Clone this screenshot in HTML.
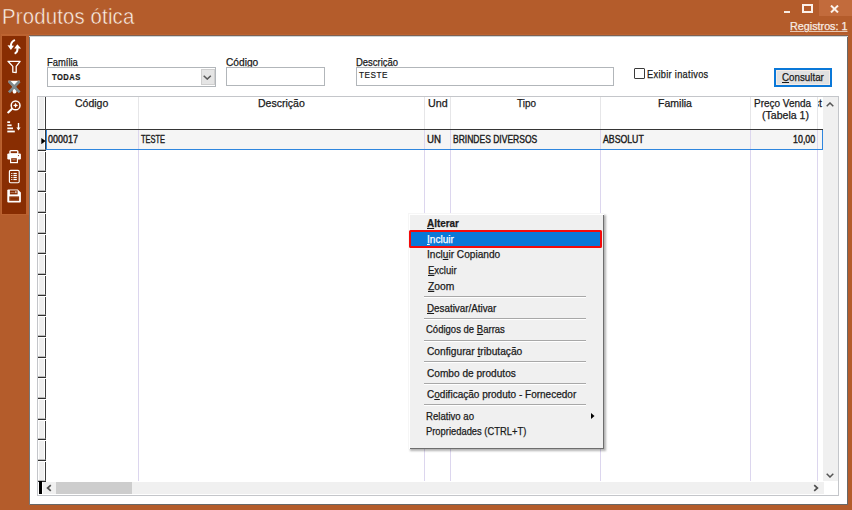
<!DOCTYPE html><html><head><meta charset="utf-8"><style>
html,body{margin:0;padding:0;}
body{width:852px;height:510px;overflow:hidden;position:relative;background:#b45c2b;font-family:"Liberation Sans", sans-serif;}
.a{position:absolute;}
.t{position:absolute;white-space:nowrap;transform-origin:0 0;-webkit-text-stroke:0.25px currentColor;}
u{text-decoration:underline;text-decoration-thickness:1px;text-underline-offset:0.6px;}
</style></head><body>
<div class="t" id="title" style="left:1.71px;top:2.34px;font-size:22.4px;line-height:29px;color:#fdf3ec;font-weight:normal;transform:scaleX(0.9075);-webkit-text-stroke:0.5px #b45c2b;letter-spacing:0.2px;">Produtos ótica</div>
<div class="a" style="left:819px;top:0;width:33px;height:16px;background:#c26b3c;"></div>
<div class="a" style="left:783.5px;top:10.5px;width:6px;height:2px;background:#f7ebe2;"></div>
<div class="a" style="left:802.4px;top:4.4px;width:6.2px;height:4.6px;border:2px solid #fbf1ea;border-top-width:2.3px;"></div>
<svg class="a" style="left:830px;top:5px" width="9" height="8" viewBox="0 0 9 8"><path d="M1 0.6L8 7.4M8 0.6L1 7.4" stroke="#fbf1ea" stroke-width="2.1"/></svg>
<div class="t" id="reg" style="left:789.67px;top:20.10px;font-size:10.4px;line-height:14px;color:#f7ebe2;font-weight:normal;transform:scaleX(1.0370);"><u style="text-underline-offset:1.1px;text-decoration-color:rgba(247,235,226,0.75)">Registros: 1</u></div>
<div class="a" style="left:1px;top:34px;width:27.5px;height:181px;background:#bb6230;"></div>
<div class="a" style="left:2px;top:35.5px;width:24.3px;height:178px;background:#882d02;"></div>
<svg class="a" style="left:0;top:0" width="30" height="220" viewBox="0 0 30 220">
<g fill="none" stroke="#ffffff" stroke-linecap="round" stroke-linejoin="round">
<path d="M14.2 40.4 Q10.8 42.2 10.9 46" stroke-width="2"/>
<path d="M17.5 48 Q17.7 51.8 15.4 53.2" stroke-width="2"/>
<path d="M8 61.3 H20.1 L16.2 66.4 V72.6 L12.8 72.2 V66.4 Z" stroke-width="1.3"/>
<circle cx="15.6" cy="105.4" r="4.4" stroke-width="1.5"/>
<path d="M11.8 109 L8.2 112.4" stroke-width="2.1"/>
<rect x="10" y="150.6" width="7.8" height="3.4" rx="0.8" stroke-width="1.4"/>
<rect x="9.4" y="170.4" width="9.8" height="12.3" rx="1.2" stroke-width="1.15"/>
</g>
<g fill="#ffffff">
<path d="M7.5 45.3 L14 45.7 L10.9 50 Z"/>
<path d="M17.3 44.2 L21.1 48.6 L14.2 48.4 Z"/>
<path d="M8 80.8 H20.1 L16 86.5 L16.6 92 Q15.5 94 13.6 93.4 Q12.2 92.6 12.6 90 L12.4 86.5 Z"/>
<path d="M15.6 102.8 L16.4 104.6 L18.2 105.4 L16.4 106.2 L15.6 108 L14.8 106.2 L13 105.4 L14.8 104.6 Z"/>
<rect x="7.3" y="121.3" width="2.8" height="1.7"/>
<rect x="7.3" y="124.4" width="4.3" height="1.7"/>
<rect x="7.3" y="127.5" width="5.7" height="1.7"/>
<rect x="7.3" y="130.6" width="7.5" height="1.8"/>
<rect x="17.8" y="123" width="1.4" height="5"/>
<path d="M16.4 127.5 H20.6 L18.5 130.6 Z"/>
<rect x="7.3" y="153.4" width="13.6" height="6" rx="1.2"/>
<rect x="11.2" y="173" width="1.2" height="1"/><rect x="13.4" y="172.9" width="3.4" height="1.2"/>
<rect x="11.2" y="175" width="1.2" height="1"/><rect x="13.4" y="174.9" width="3.4" height="1.2"/>
<rect x="11.2" y="177" width="1.2" height="1"/><rect x="13.4" y="176.9" width="3.4" height="1.2"/>
<rect x="11.2" y="179" width="1.2" height="1"/><rect x="13.4" y="178.9" width="3.4" height="1.2"/>
</g>
<path d="M8.9 81.2 L19.6 92.4 M19.6 81.2 L8.9 92.4" stroke="#7e898d" stroke-width="2.7"/>
<circle cx="18.5" cy="155.6" r="0.6" fill="#8a2e04"/>
<rect x="10.6" y="157.6" width="6.8" height="5" fill="#8a2e04" stroke="#ffffff" stroke-width="1.2"/>
<rect x="12.4" y="159.4" width="3.2" height="0.8" fill="#ffffff" opacity="0.6"/>
<path d="M8.3 189.5 H17.8 L20.9 192.6 V201.6 Q20.9 202.6 19.9 202.6 H8.3 Q7.3 202.6 7.3 201.6 V190.5 Q7.3 189.5 8.3 189.5 Z" fill="#fff"/>
<rect x="9.9" y="190.4" width="7.7" height="4" fill="#882d02"/>
<rect x="10.4" y="192.1" width="4.2" height="0.7" fill="#fff" opacity="0.45"/>
<rect x="15.2" y="191.2" width="1.3" height="1.9" fill="#fff" opacity="0.8"/>
<rect x="9.3" y="196.4" width="9.8" height="4.4" fill="#882d02"/>
<rect x="10.2" y="197.3" width="8" height="2.6" fill="none" stroke="#fff" stroke-width="0.5" opacity="0.12"/>
</svg>
<div class="a" style="left:1px;top:34px;width:848px;height:1px;background:#bd6330;"></div>
<div class="a" style="left:29px;top:35px;width:819px;height:470px;background:#fff;box-shadow:inset 0 1px 0 #806050, inset 0 2px 0 #cdd6da, inset 1px 0 0 #787878, inset -1px -1px 0 #686868;"></div>
<div class="t" id="lfam" style="left:47.08px;top:55.46px;font-size:10.5px;line-height:14px;color:#1a1a1a;font-weight:normal;transform:scaleX(0.8946);">Família</div>
<div class="a" style="left:47px;top:67px;width:167px;height:18px;border:1px solid #b2b6ba;background:#fff;"></div>
<div class="t" id="todas" style="left:52.32px;top:70.74px;font-size:9.4px;line-height:12px;color:#1a1a1a;font-weight:bold;transform:scaleX(0.8087);-webkit-text-stroke:0.2px currentColor;letter-spacing:0.6px;">TODAS</div>
<div class="a" style="left:200.5px;top:68.8px;width:12px;height:14px;background:#e5e5e5;border:1px solid #cfcfcf;"></div>
<svg class="a" style="left:203px;top:74.5px" width="8.5" height="5" viewBox="0 0 8.5 5"><path d="M0.7 0.7L4.25 4.1L7.8 0.7" fill="none" stroke="#5a5a5a" stroke-width="1.5"/></svg>
<div class="a" style="left:220px;top:50px;width:150px;height:17px;overflow:hidden;">
<div class="t" id="lcod" style="left:6.48px;top:5.46px;font-size:10.5px;line-height:14px;color:#1a1a1a;font-weight:normal;transform:scaleX(0.9693);">Código</div>
</div>
<div class="a" style="left:226px;top:67px;width:97px;height:17px;border:1px solid #b2b6ba;background:#fff;"></div>
<div class="a" style="left:350px;top:50px;width:150px;height:17px;overflow:hidden;">
<div class="t" id="ldesc" style="left:5.51px;top:5.46px;font-size:10.5px;line-height:14px;color:#1a1a1a;font-weight:normal;transform:scaleX(0.9013);">Descrição</div>
</div>
<div class="a" style="left:356px;top:67px;width:256px;height:17px;border:1px solid #b2b6ba;background:#fff;"></div>
<div class="t" id="teste1" style="left:359.04px;top:69.21px;font-size:9.2px;line-height:12px;color:#1a1a1a;font-weight:normal;transform:scaleX(0.8891);letter-spacing:0.6px;-webkit-text-stroke:0.2px;">TESTE</div>
<div class="a" style="left:634px;top:68.4px;width:8.6px;height:8.6px;border:1.15px solid #3a3a3a;border-radius:1px;background:#fff;"></div>
<div class="t" id="exib" style="left:646.65px;top:67.16px;font-size:10.5px;line-height:14px;color:#1a1a1a;font-weight:normal;transform:scaleX(0.8786);letter-spacing:0.35px;">Exibir inativos</div>
<div class="a" style="left:774px;top:67.7px;width:53.8px;height:15.2px;border:2px solid #0a78d8;background:#e1e1e1;box-shadow:inset 0 0 0 1px #f6ece6;"></div>
<div class="t" id="cons" style="left:781.76px;top:70.26px;font-size:10.5px;line-height:14px;color:#1a1a1a;font-weight:normal;transform:scaleX(0.9311);"><u>C</u>onsultar</div>
<div class="a" style="left:37px;top:96px;width:800px;height:397.5px;border:1px solid #c4c6ca;background:#fff;"></div>
<div class="a" style="left:38px;top:97px;width:7px;height:384px;background:#efefef;box-shadow:inset 1px 0 0 #fff, inset -1px 0 0 #fff;"></div>
<div class="a" style="left:45px;top:97px;width:1.2px;height:384px;background:#3c3c3c;"></div>
<div class="a" style="left:38px;top:129px;width:786px;height:1.3px;background:#353535;"></div>
<div class="a" style="left:47px;top:130px;width:776px;height:19px;background:#f5f5f5;"></div>
<div class="a" style="left:137.5px;top:97px;width:1px;height:32px;background:#e6e6e8;"></div>
<div class="a" style="left:137.5px;top:130px;width:1px;height:351px;background:#dcd6ee;"></div>
<div class="a" style="left:424px;top:97px;width:1px;height:32px;background:#e6e6e8;"></div>
<div class="a" style="left:424px;top:130px;width:1px;height:351px;background:#dcd6ee;"></div>
<div class="a" style="left:450px;top:97px;width:1px;height:32px;background:#e6e6e8;"></div>
<div class="a" style="left:450px;top:130px;width:1px;height:351px;background:#dcd6ee;"></div>
<div class="a" style="left:600px;top:97px;width:1px;height:32px;background:#e6e6e8;"></div>
<div class="a" style="left:600px;top:130px;width:1px;height:351px;background:#dcd6ee;"></div>
<div class="a" style="left:750px;top:97px;width:1px;height:32px;background:#e6e6e8;"></div>
<div class="a" style="left:750px;top:130px;width:1px;height:351px;background:#dcd6ee;"></div>
<div class="a" style="left:817px;top:97px;width:1px;height:32px;background:#e6e6e8;"></div>
<div class="a" style="left:817px;top:130px;width:1px;height:351px;background:#dcd6ee;"></div>
<div class="a" style="left:38px;top:150px;width:8px;height:1px;background:#303030;box-shadow:0 1px 0 #fff, 0 -0.5px 0 #8a8a8a;"></div>
<div class="a" style="left:38px;top:171px;width:8px;height:1px;background:#303030;box-shadow:0 1px 0 #fff, 0 -0.5px 0 #8a8a8a;"></div>
<div class="a" style="left:38px;top:191px;width:8px;height:1px;background:#303030;box-shadow:0 1px 0 #fff, 0 -0.5px 0 #8a8a8a;"></div>
<div class="a" style="left:38px;top:212px;width:8px;height:1px;background:#303030;box-shadow:0 1px 0 #fff, 0 -0.5px 0 #8a8a8a;"></div>
<div class="a" style="left:38px;top:233px;width:8px;height:1px;background:#303030;box-shadow:0 1px 0 #fff, 0 -0.5px 0 #8a8a8a;"></div>
<div class="a" style="left:38px;top:253px;width:8px;height:1px;background:#303030;box-shadow:0 1px 0 #fff, 0 -0.5px 0 #8a8a8a;"></div>
<div class="a" style="left:38px;top:274px;width:8px;height:1px;background:#303030;box-shadow:0 1px 0 #fff, 0 -0.5px 0 #8a8a8a;"></div>
<div class="a" style="left:38px;top:295px;width:8px;height:1px;background:#303030;box-shadow:0 1px 0 #fff, 0 -0.5px 0 #8a8a8a;"></div>
<div class="a" style="left:38px;top:315px;width:8px;height:1px;background:#303030;box-shadow:0 1px 0 #fff, 0 -0.5px 0 #8a8a8a;"></div>
<div class="a" style="left:38px;top:336px;width:8px;height:1px;background:#303030;box-shadow:0 1px 0 #fff, 0 -0.5px 0 #8a8a8a;"></div>
<div class="a" style="left:38px;top:357px;width:8px;height:1px;background:#303030;box-shadow:0 1px 0 #fff, 0 -0.5px 0 #8a8a8a;"></div>
<div class="a" style="left:38px;top:377px;width:8px;height:1px;background:#303030;box-shadow:0 1px 0 #fff, 0 -0.5px 0 #8a8a8a;"></div>
<div class="a" style="left:38px;top:398px;width:8px;height:1px;background:#303030;box-shadow:0 1px 0 #fff, 0 -0.5px 0 #8a8a8a;"></div>
<div class="a" style="left:38px;top:419px;width:8px;height:1px;background:#303030;box-shadow:0 1px 0 #fff, 0 -0.5px 0 #8a8a8a;"></div>
<div class="a" style="left:38px;top:439px;width:8px;height:1px;background:#303030;box-shadow:0 1px 0 #fff, 0 -0.5px 0 #8a8a8a;"></div>
<div class="a" style="left:38px;top:460px;width:8px;height:1px;background:#303030;box-shadow:0 1px 0 #fff, 0 -0.5px 0 #8a8a8a;"></div>
<div class="a" style="left:38px;top:481px;width:8px;height:1px;background:#303030;box-shadow:0 1px 0 #fff, 0 -0.5px 0 #8a8a8a;"></div>
<div class="a" style="left:46px;top:130px;width:775px;height:18.5px;border:1px solid #2f86de;border-top:none;"></div>
<svg class="a" style="left:41px;top:137.8px" width="5" height="6.5" viewBox="0 0 5 6.5"><path d="M0.3 0L4.6 3.1L0.3 6.2Z" fill="#000"/></svg>
<div class="t" id="hcod" style="left:75.10px;top:96.06px;font-size:10.5px;line-height:14px;color:#1a1a1a;font-weight:normal;transform:scaleX(0.9983);">Código</div>
<div class="t" id="hdesc" style="left:258.45px;top:95.96px;font-size:10.5px;line-height:14px;color:#1a1a1a;font-weight:normal;transform:scaleX(1.0020);">Descrição</div>
<div class="t" id="hund" style="left:428.01px;top:96.16px;font-size:10.5px;line-height:14px;color:#1a1a1a;font-weight:normal;transform:scaleX(1.0209);">Und</div>
<div class="t" id="htipo" style="left:516.61px;top:96.16px;font-size:10.5px;line-height:14px;color:#1a1a1a;font-weight:normal;transform:scaleX(0.9437);">Tipo</div>
<div class="t" id="hfam" style="left:658.02px;top:96.16px;font-size:10.5px;line-height:14px;color:#1a1a1a;font-weight:normal;transform:scaleX(1.0021);">Familia</div>
<div class="t" id="hpv1" style="left:753.66px;top:96.36px;font-size:10.5px;line-height:14px;color:#1a1a1a;font-weight:normal;transform:scaleX(0.9486);">Preço Venda</div>
<div class="t" id="hpv2" style="left:762.31px;top:108.36px;font-size:10.5px;line-height:14px;color:#1a1a1a;font-weight:normal;transform:scaleX(1.0045);">(Tabela 1)</div>
<div class="a" style="left:818px;top:96px;width:5px;height:20px;overflow:hidden;">
<div class="t" id="ht" style="left:-4.30px;top:0.36px;font-size:10.5px;line-height:14px;color:#1a1a1a;font-weight:normal;transform:scaleX(1.0000);">st</div>
</div>
<div class="t" id="r1" style="left:47.95px;top:132.46px;font-size:10.5px;line-height:14px;color:#1a1a1a;font-weight:normal;transform:scaleX(0.8534);-webkit-text-stroke:0.4px currentColor;">000017</div>
<div class="t" id="r2" style="left:140.65px;top:132.46px;font-size:10.5px;line-height:14px;color:#1a1a1a;font-weight:normal;transform:scaleX(0.7125);-webkit-text-stroke:0.4px currentColor;">TESTE</div>
<div class="t" id="r3" style="left:426.90px;top:132.46px;font-size:10.5px;line-height:14px;color:#1a1a1a;font-weight:normal;transform:scaleX(0.9176);-webkit-text-stroke:0.4px currentColor;">UN</div>
<div class="t" id="r4" style="left:452.53px;top:132.46px;font-size:10.5px;line-height:14px;color:#1a1a1a;font-weight:normal;transform:scaleX(0.8105);-webkit-text-stroke:0.4px currentColor;">BRINDES DIVERSOS</div>
<div class="t" id="r5" style="left:603.03px;top:132.46px;font-size:10.5px;line-height:14px;color:#1a1a1a;font-weight:normal;transform:scaleX(0.8317);-webkit-text-stroke:0.4px currentColor;">ABSOLUT</div>
<div class="t" id="r6" style="left:793.15px;top:132.16px;font-size:10.5px;line-height:14px;color:#1a1a1a;font-weight:normal;transform:scaleX(0.8460);-webkit-text-stroke:0.4px currentColor;">10,00</div>
<div class="a" style="left:823px;top:97px;width:15px;height:384px;background:#f0f0f0;"></div>
<svg class="a" style="left:825.8px;top:102px" width="8" height="5" viewBox="0 0 8 5"><path d="M0.7 4.3L4 1L7.3 4.3" fill="none" stroke="#555" stroke-width="1.5"/></svg>
<svg class="a" style="left:825.8px;top:472.5px" width="8" height="5" viewBox="0 0 8 5"><path d="M0.7 0.7L4 4L7.3 0.7" fill="none" stroke="#555" stroke-width="1.5"/></svg>
<div class="a" style="left:43px;top:482px;width:781px;height:12px;background:#f0f0f0;"></div>
<div class="a" style="left:56px;top:482px;width:76px;height:12px;background:#cdcdcd;"></div>
<svg class="a" style="left:46px;top:484px" width="6" height="8" viewBox="0 0 6 8"><path d="M4.8 1.2L1.6 4L4.8 6.8" fill="none" stroke="#505050" stroke-width="1.7"/></svg>
<svg class="a" style="left:813px;top:484px" width="6" height="8" viewBox="0 0 6 8"><path d="M1.2 1.2L4.4 4L1.2 6.8" fill="none" stroke="#505050" stroke-width="1.7"/></svg>
<div class="a" style="left:39px;top:481px;width:3px;height:13px;background:#000;"></div>
<div class="a" style="left:408px;top:213px;width:196px;height:236px;background:#f0f0f0;box-shadow:inset 1px 1px 0 #f6f6f6, inset 2px 2px 0 #fff, inset -1px -1px 0 #6e6e6e, 2px 2px 2px rgba(0,0,0,0.3);"></div>
<div class="a" style="left:409px;top:229.5px;width:188.6px;height:14px;background:#0a78d8;border:2.3px solid #f40a0a;border-radius:1.5px;"></div>
<div class="t" id="m1" style="left:426.88px;top:216.06px;font-size:10.5px;line-height:14px;color:#1a1a1a;font-weight:bold;transform:scaleX(0.9427);"><u>A</u>lterar</div>
<div class="t" id="m2" style="left:427.00px;top:231.66px;font-size:10.5px;line-height:14px;color:#fff;font-weight:normal;transform:scaleX(0.9597);"><u>I</u>ncluir</div>
<div class="t" id="m3" style="left:426.77px;top:247.26px;font-size:10.5px;line-height:14px;color:#1a1a1a;font-weight:normal;transform:scaleX(0.9642);">Incl<u>u</u>ir Copiando</div>
<div class="t" id="m4" style="left:427.53px;top:263.16px;font-size:10.5px;line-height:14px;color:#1a1a1a;font-weight:normal;transform:scaleX(0.9061);"><u>E</u>xcluir</div>
<div class="t" id="m5" style="left:427.53px;top:279.16px;font-size:10.5px;line-height:14px;color:#1a1a1a;font-weight:normal;transform:scaleX(0.9801);"><u>Z</u>oom</div>
<div class="t" id="m6" style="left:427.41px;top:300.86px;font-size:10.5px;line-height:14px;color:#1a1a1a;font-weight:normal;transform:scaleX(0.9357);"><u>D</u>esativar/Ativar</div>
<div class="t" id="m7" style="left:426.30px;top:322.36px;font-size:10.5px;line-height:14px;color:#1a1a1a;font-weight:normal;transform:scaleX(0.9065);">Códigos de <u>B</u>arras</div>
<div class="t" id="m8" style="left:426.61px;top:343.56px;font-size:10.5px;line-height:14px;color:#1a1a1a;font-weight:normal;transform:scaleX(0.9714);">Configurar <u>t</u>ributação</div>
<div class="t" id="m9" style="left:426.56px;top:365.86px;font-size:10.5px;line-height:14px;color:#1a1a1a;font-weight:normal;transform:scaleX(0.9631);">Combo de produtos</div>
<div class="t" id="m10" style="left:426.56px;top:387.36px;font-size:10.5px;line-height:14px;color:#1a1a1a;font-weight:normal;transform:scaleX(0.9541);">C<u>o</u>dificação produto - Fornecedor</div>
<div class="t" id="m11" style="left:426.33px;top:408.56px;font-size:10.5px;line-height:14px;color:#1a1a1a;font-weight:normal;transform:scaleX(0.9146);">Relativo ao</div>
<div class="t" id="m12" style="left:426.43px;top:424.36px;font-size:10.5px;line-height:14px;color:#1a1a1a;font-weight:normal;transform:scaleX(0.8926);">Propriedades (CTRL+T)</div>
<div class="a" style="left:424px;top:296px;width:162px;height:1px;background:#a8a8a8;box-shadow:0 1px 0 #fff;"></div>
<div class="a" style="left:424px;top:318px;width:162px;height:1px;background:#a8a8a8;box-shadow:0 1px 0 #fff;"></div>
<div class="a" style="left:424px;top:339.5px;width:162px;height:1px;background:#a8a8a8;box-shadow:0 1px 0 #fff;"></div>
<div class="a" style="left:424px;top:361px;width:162px;height:1px;background:#a8a8a8;box-shadow:0 1px 0 #fff;"></div>
<div class="a" style="left:424px;top:383px;width:162px;height:1px;background:#a8a8a8;box-shadow:0 1px 0 #fff;"></div>
<div class="a" style="left:424px;top:404px;width:162px;height:1px;background:#a8a8a8;box-shadow:0 1px 0 #fff;"></div>
<svg class="a" style="left:591px;top:412.5px" width="4" height="7" viewBox="0 0 4 7"><path d="M0 0L3.5 3L0 6Z" fill="#000"/></svg>
</body></html>
